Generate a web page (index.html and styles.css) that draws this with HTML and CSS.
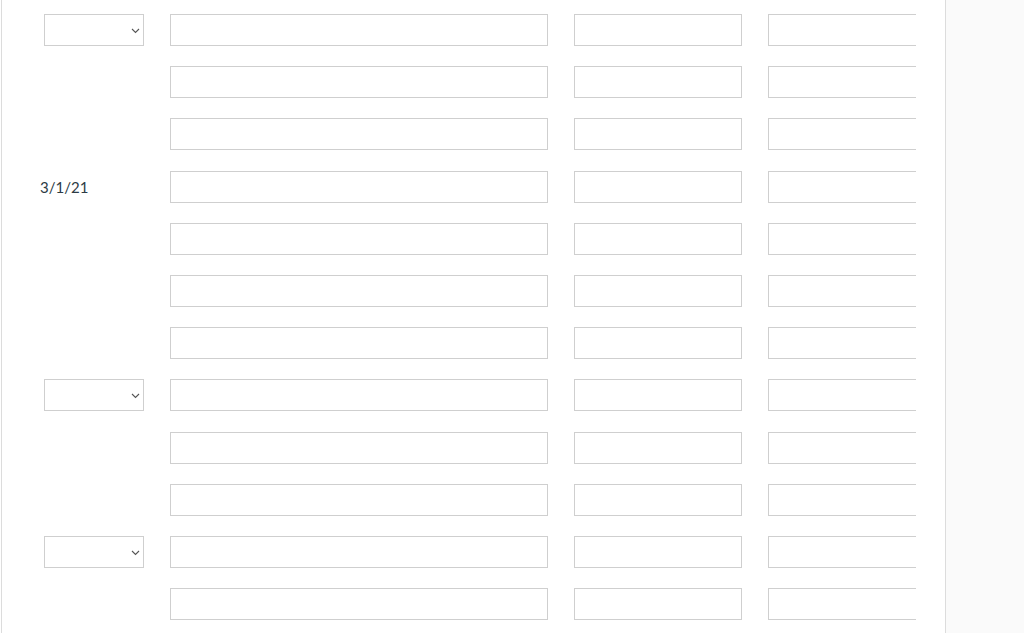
FILE: index.html
```html
<!DOCTYPE html>
<html>
<head>
<meta charset="utf-8">
<link rel="stylesheet" href="styles.css">
</head>
<body>
<div class="page">
  <main class="main">
    <div class="clip">
      <div class="rows">
        <div class="row"><div class="c1"><div class="sel"><svg class="chev" width="9" height="6" viewBox="0 0 9 6"><path d="M1 1l3.5 3.5L8 1" fill="none" stroke="#555" stroke-width="1.1"/></svg></div></div><div class="in w1"></div><div class="in w2"></div><div class="in w3"></div></div>
        <div class="row"><div class="c1"></div><div class="in w1"></div><div class="in w2"></div><div class="in w3"></div></div>
        <div class="row"><div class="c1"></div><div class="in w1"></div><div class="in w2"></div><div class="in w3"></div></div>
        <div class="row"><div class="c1"><span class="date">3/1/21</span></div><div class="in w1"></div><div class="in w2"></div><div class="in w3"></div></div>
        <div class="row"><div class="c1"></div><div class="in w1"></div><div class="in w2"></div><div class="in w3"></div></div>
        <div class="row"><div class="c1"></div><div class="in w1"></div><div class="in w2"></div><div class="in w3"></div></div>
        <div class="row"><div class="c1"></div><div class="in w1"></div><div class="in w2"></div><div class="in w3"></div></div>
        <div class="row"><div class="c1"><div class="sel"><svg class="chev" width="9" height="6" viewBox="0 0 9 6"><path d="M1 1l3.5 3.5L8 1" fill="none" stroke="#555" stroke-width="1.1"/></svg></div></div><div class="in w1"></div><div class="in w2"></div><div class="in w3"></div></div>
        <div class="row"><div class="c1"></div><div class="in w1"></div><div class="in w2"></div><div class="in w3"></div></div>
        <div class="row"><div class="c1"></div><div class="in w1"></div><div class="in w2"></div><div class="in w3"></div></div>
        <div class="row"><div class="c1"><div class="sel"><svg class="chev" width="9" height="6" viewBox="0 0 9 6"><path d="M1 1l3.5 3.5L8 1" fill="none" stroke="#555" stroke-width="1.1"/></svg></div></div><div class="in w1"></div><div class="in w2"></div><div class="in w3"></div></div>
        <div class="row"><div class="c1"></div><div class="in w1"></div><div class="in w2"></div><div class="in w3"></div></div>
      </div>
    </div>
  </main>
  <aside class="side"></aside>
</div>
</body>
</html>
```
FILE: styles.css
```css
html, body {
  margin: 0;
  padding: 0;
  height: 100%;
  overflow: hidden;
  background: #fff;
  font-family: Lato, "Noto Sans", sans-serif;
}
.page {
  display: flex;
  height: 633px;
}
.main {
  width: 944px;
  margin-left: 1px;
  border-left: 1px solid #dcdcdc;
  padding-right: 30px;
  box-sizing: border-box;
  flex: none;
  background: #fff;
}
.clip {
  width: 914px;
  height: 100%;
  overflow: hidden;
}
.rows {
  padding-top: 4px;
  width: 1000px;
}
.row {
  display: flex;
  align-items: center;
  gap: 26px;
  height: 52.2px;
}
.c1 {
  width: 142px;
  flex: none;
  display: flex;
  align-items: center;
  height: 32px;
}
.sel {
  margin-left: 42px;
  width: 100px;
  height: 32px;
  box-sizing: border-box;
  border: 1px solid #cfcfcf;
  background: #fff;
  position: relative;
}
.chev {
  position: absolute;
  right: 3px;
  top: 13px;
}
.date {
  margin-left: 38px;
  font-size: 15px;
  color: #2d3b45;
}
.in {
  flex: none;
  height: 32px;
  box-sizing: border-box;
  border: 1px solid #cfcfcf;
  background: #fff;
}
.w1 { width: 378px; }
.w2 { width: 168px; }
.w3 { width: 168px; }
.side {
  flex: 1;
  border-left: 1px solid #dcdcdc;
  background: #fafafa;
}
```
